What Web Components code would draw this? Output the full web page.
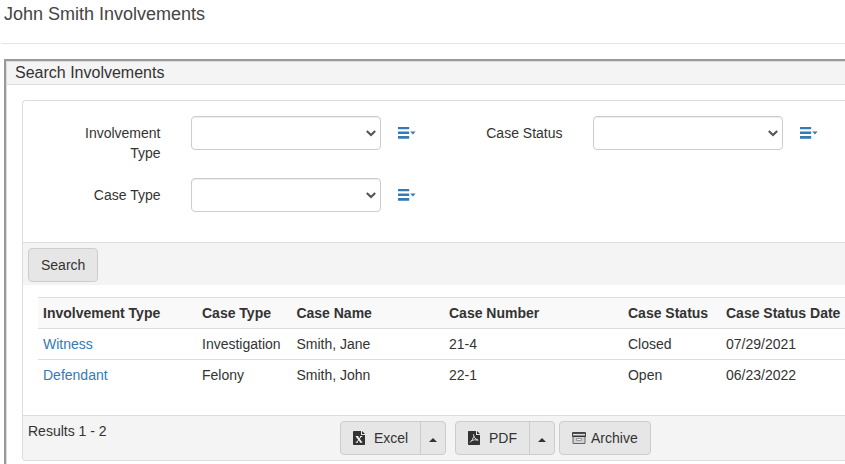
<!DOCTYPE html>
<html lang="en">
<head>
<meta charset="utf-8">
<title>John Smith Involvements</title>
<style>
html,body{margin:0;height:100%;overflow:hidden;background:#fff}
body{font:14px/20px "Liberation Sans",Arial,sans-serif;color:#333}
</style>
</head>
<body>
<involvements-page></involvements-page>
<script>
const define = (name, html, setup) => customElements.define(name, class extends HTMLElement {
  connectedCallback() {
    if (this.shadowRoot) return;
    const t = document.createElement('template');
    t.innerHTML = html;
    this.attachShadow({mode:'open'}).append(t.content.cloneNode(true));
    if (setup) setup(this, this.shadowRoot);
  }
});

define('page-title', `<style>
:host{display:block;height:43px;margin-left:1px;border-bottom:1px solid #e5e5e5}
h1{margin:0;padding:4px 0 0 3px;font-size:18px;line-height:20px;font-weight:400;color:#444}
</style><h1><slot></slot></h1>`);

define('outer-panel', `<style>
:host{display:block;margin:15px 0 0 4px;height:405px;border:solid #999;border-width:2px 0 0 2px;box-sizing:border-box}
.in{border:solid #ddd;border-width:1px 0 0 1px;height:100%;box-sizing:border-box}
header{height:22px;background:#f4f4f4;border-bottom:1px solid #ddd;padding-left:8px;font-size:16px;line-height:21px}
.body{padding:15px 0 0 15px}
</style><div class="in"><header><slot name="heading"></slot></header><div class="body"><slot></slot></div></div>`);

define('inner-panel', `<style>
:host{display:block;border:1px solid #ddd;border-right:0;border-radius:4px 0 0 4px;overflow:hidden;height:361px;box-sizing:border-box}
</style><slot></slot>`);

define('list-menu', `<style>
:host{display:block;width:18px;height:14px}svg{display:block}
</style><svg width="18" height="14" viewBox="0 0 18 14" fill="#337ab7"><rect x="-.4" y="1" width="11.6" height="2.3" rx=".5"/><rect x="-.4" y="5.5" width="11.6" height="2.6" rx=".5"/><rect x="-.4" y="10" width="11.6" height="2.8" rx=".5"/><path d="M12.2 5.4h5.4L14.9 8.4z"/></svg>`);

define('select-box', `<style>
:host{display:flex;align-items:center;justify-content:flex-end;box-sizing:border-box;width:190px;height:34px;border:1px solid #ccc;border-radius:4px;background:#fff;box-shadow:inset 0 1px 1px rgba(0,0,0,.075);padding-right:4px}
</style><svg width="10" height="8" viewBox="0 0 10 8" fill="none" stroke="#555" stroke-width="2.1"><path d="M.8 2 5 6 9.2 2"/></svg>`);

define('search-field', `<style>
:host{display:grid;grid-template-columns:101px 190px 18px;column-gap:30px;height:62px;align-items:start}
label{padding-top:7px;text-align:right;justify-self:end}
.text{display:block;width:100px;padding-right:.5px}
list-menu{margin:10px 0 0 -13px}
</style><label><span class="text"><slot></slot></span></label><select-box></select-box><list-menu></list-menu>`);

define('search-form', `<style>
:host{display:grid;grid-template-columns:402px 401px;padding:15px 0 0 37px;height:126px;align-content:start;border-bottom:1px solid #ddd}
</style><slot></slot>`);

define('tool-button', `<style>
:host{display:inline-flex;height:34px;box-sizing:border-box;border:1px solid #ccc;border-radius:4px;background:#e6e6e6;color:#333}
.main{display:flex;align-items:center;padding:0 12px}
slot[name=icon]{display:contents}
.caret{display:none;width:24px;border-left:1px solid #ccc;align-items:center;justify-content:center}
:host([split]) .caret{display:flex}
svg{margin-top:3px}
</style><div class="main"><slot name="icon"></slot><slot></slot></div><div class="caret"><svg width="8" height="4" viewBox="0 0 8 4"><path d="M0 4 4 0l4 4z" fill="#333"/></svg></div>`);

define('search-bar', `<style>
:host{display:block;height:42px;background:#f4f4f4;padding:5px;box-sizing:border-box}
</style><slot></slot>`);

const rows = [
  ['Witness','Investigation','Smith, Jane','21-4','Closed','07/29/2021'],
  ['Defendant','Felony','Smith, John','22-1','Open','06/23/2022']
];
define('results-table', `<style>
:host{display:block;margin:12px 0 0 15px;height:118px}
.r{display:grid;grid-template-columns:159px 94.4px 152.6px 179px 98px 1fr;padding:5px 0 5px 5px;border-top:1px solid #ddd;height:20px;white-space:nowrap}
.h{font-weight:700;background:#f9f9f9}
a{color:#337ab7}
</style><div class="r h"><span>Involvement Type</span><span>Case Type</span><span>Case Name</span><span>Case Number</span><span>Case Status</span><span>Case Status Date</span></div>`, (el, root) => {
  for (const row of rows) {
    const r = document.createElement('div');
    r.className = 'r';
    row.forEach((v, i) => {
      const c = document.createElement(i ? 'span' : 'a');
      c.textContent = v;
      r.append(c);
    });
    root.append(r);
  }
});

define('results-footer', `<style>
:host{display:flex;height:45px;background:#f4f4f4;border-top:1px solid #ddd;padding:5px 0 0 5px;box-sizing:border-box}
.count{width:312px}
.tools{display:flex}
.tools tool-button:nth-child(1){width:106px;margin-right:9px}
.tools tool-button:nth-child(2){width:100px;margin-right:4px}
.tools tool-button:nth-child(3){width:92px}
svg{flex:none;margin-right:9px}
svg.box{margin:-1px 5px 0 0}
</style><span class="count">Results 1 - 2</span>
<div class="tools">
<tool-button split><svg slot="icon" width="12" height="14" viewBox="0 0 12 14"><path d="M.8 0H8v4h4v9.2q0 .8-.8.8H.8q-.8 0-.8-.8V.8Q0 0 .8 0z" fill="#333"/><path d="M9 0l3 3H9z" fill="#333"/><path d="M3.8 5.4l4.4 5.8" stroke="#eee" stroke-width="1.9"/><path d="M8.1 5.4l-4.2 5.8M2.8 5.5h2.5M7 5.5h2.2M2.8 11.2H5M6.8 11.2h2.5" stroke="#eee" stroke-width="1"/></svg>Excel</tool-button>
<tool-button split><svg slot="icon" width="12" height="14" viewBox="0 0 12 14"><path d="M.8 0H8v4h4v9.2q0 .8-.8.8H.8q-.8 0-.8-.8V.8Q0 0 .8 0z" fill="#333"/><path d="M9 0l3 3H9z" fill="#333"/><path d="M5.3 3.2q0 4 4.8 6.2M5.7 5.6Q4.8 9 2 11.5M3.2 9.6q3-1.3 7-.6" fill="none" stroke="#ddd" stroke-width="1"/></svg>PDF</tool-button>
<tool-button><svg class="box" slot="icon" width="14" height="12" viewBox="0 0 14 12"><path d="M1 4v7.5h12V4" fill="#d2d2d2" stroke="#666"/><path d="M.5.8h13v3.4H.5z" fill="#ddd" stroke="#444"/><path d="M.5 1h13M.5 4.3h13" stroke="#333" stroke-width="1.3"/><path d="M4.5 6.5h5v2h-5z" fill="#eee" stroke="#888" stroke-width=".8"/></svg>Archive</tool-button>
</div>`);

define('involvements-page', `<style>:host{display:block;height:464px;overflow:hidden}</style>
<page-title>John Smith Involvements</page-title>
<outer-panel><span slot="heading">Search Involvements</span>
<inner-panel>
<search-form><search-field>Involvement Type</search-field><search-field>Case Status</search-field><search-field>Case Type</search-field></search-form>
<search-bar><tool-button>Search</tool-button></search-bar>
<results-table></results-table>
<results-footer></results-footer>
</inner-panel></outer-panel>`);
</script>
</body>
</html>
